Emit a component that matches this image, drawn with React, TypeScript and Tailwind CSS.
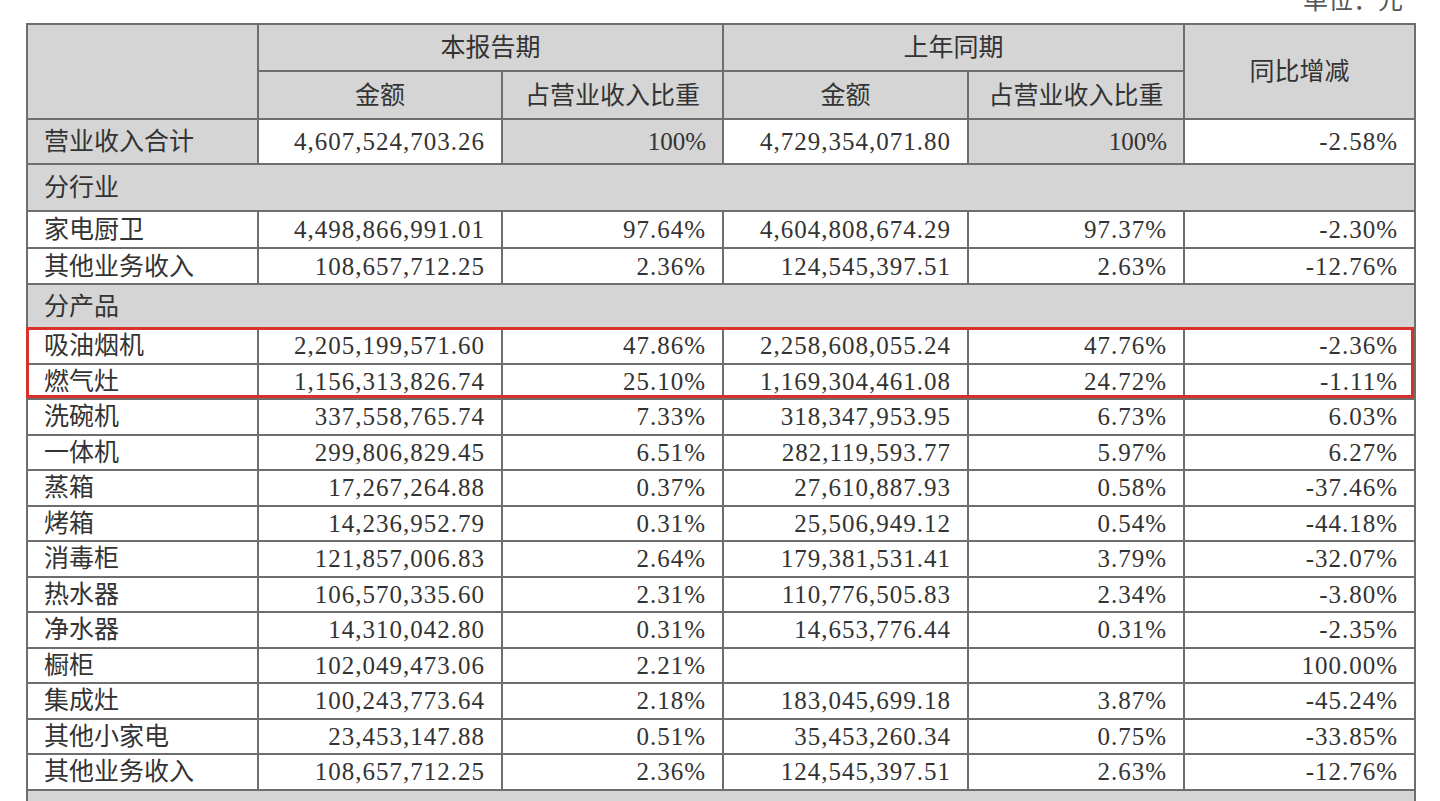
import React from 'react';

type Row =
  | { kind: 'section'; name: string }
  | { kind: 'data'; name: string; cells: string[]; h?: string };

const rows: Row[] = [
  { kind: 'section', name: '分行业' },
  { kind: 'data', name: '家电厨卫', cells: ['4,498,866,991.01', '97.64%', '4,604,808,674.29', '97.37%', '-2.30%'], h: 'h-[37px]' },
  { kind: 'data', name: '其他业务收入', cells: ['108,657,712.25', '2.36%', '124,545,397.51', '2.63%', '-12.76%'], h: 'h-[36px]' },
  { kind: 'section', name: '分产品' },
  { kind: 'data', name: '吸油烟机', cells: ['2,205,199,571.60', '47.86%', '2,258,608,055.24', '47.76%', '-2.36%'] },
  { kind: 'data', name: '燃气灶', cells: ['1,156,313,826.74', '25.10%', '1,169,304,461.08', '24.72%', '-1.11%'] },
  { kind: 'data', name: '洗碗机', cells: ['337,558,765.74', '7.33%', '318,347,953.95', '6.73%', '6.03%'] },
  { kind: 'data', name: '一体机', cells: ['299,806,829.45', '6.51%', '282,119,593.77', '5.97%', '6.27%'] },
  { kind: 'data', name: '蒸箱', cells: ['17,267,264.88', '0.37%', '27,610,887.93', '0.58%', '-37.46%'] },
  { kind: 'data', name: '烤箱', cells: ['14,236,952.79', '0.31%', '25,506,949.12', '0.54%', '-44.18%'] },
  { kind: 'data', name: '消毒柜', cells: ['121,857,006.83', '2.64%', '179,381,531.41', '3.79%', '-32.07%'] },
  { kind: 'data', name: '热水器', cells: ['106,570,335.60', '2.31%', '110,776,505.83', '2.34%', '-3.80%'] },
  { kind: 'data', name: '净水器', cells: ['14,310,042.80', '0.31%', '14,653,776.44', '0.31%', '-2.35%'] },
  { kind: 'data', name: '橱柜', cells: ['102,049,473.06', '2.21%', '', '', '100.00%'] },
  { kind: 'data', name: '集成灶', cells: ['100,243,773.64', '2.18%', '183,045,699.18', '3.87%', '-45.24%'] },
  { kind: 'data', name: '其他小家电', cells: ['23,453,147.88', '0.51%', '35,453,260.34', '0.75%', '-33.85%'] },
  { kind: 'data', name: '其他业务收入', cells: ['108,657,712.25', '2.36%', '124,545,397.51', '2.63%', '-12.76%'] },
];

const cell = 'border-2 border-[#6e6e6e]';

export default function App() {
  return (
    <div
      className="w-[1440px] h-[801px] overflow-hidden bg-white text-[#333] text-[25px] leading-none"
      style={{ fontFamily: '"Liberation Serif", "Noto Sans CJK SC", serif' }}
    >
      {/* unit line, mostly cut off at the top */}
      <div className="h-[23px] overflow-hidden flex justify-end pr-[37px]">
        <div className="-mt-[12px] text-[#555]">单位：元</div>
      </div>

      <div className="relative ml-[26px] w-[1388px]">
        <table className="w-[1388px] table-fixed border-collapse">
          <colgroup>
            <col className="w-[231px]" />
            <col className="w-[244px]" />
            <col className="w-[221px]" />
            <col className="w-[245px]" />
            <col className="w-[216px]" />
            <col className="w-[231px]" />
          </colgroup>
          <thead>
            <tr className="h-[47px] bg-[#d5d5d5]">
              <th rowSpan={2} className={cell}></th>
              <th colSpan={2} className={`${cell} font-normal text-center`}>本报告期</th>
              <th colSpan={2} className={`${cell} font-normal text-center`}>上年同期</th>
              <th rowSpan={2} className={`${cell} font-normal text-center`}>同比增减</th>
            </tr>
            <tr className="h-[48px] bg-[#d5d5d5]">
              <th className={`${cell} font-normal text-center`}>金额</th>
              <th className={`${cell} font-normal text-center`}>占营业收入比重</th>
              <th className={`${cell} font-normal text-center`}>金额</th>
              <th className={`${cell} font-normal text-center`}>占营业收入比重</th>
            </tr>
          </thead>
          <tbody>
            <tr className="h-[45px]">
              <td className={`${cell} bg-[#d5d5d5] pl-[16px]`}>营业收入合计</td>
              <td className={`${cell} bg-white text-right pr-[16px] tracking-[1px]`}>4,607,524,703.26</td>
              <td className={`${cell} bg-[#d5d5d5] text-right pr-[16px]`}>100%</td>
              <td className={`${cell} bg-white text-right pr-[16px] tracking-[1px]`}>4,729,354,071.80</td>
              <td className={`${cell} bg-[#d5d5d5] text-right pr-[16px]`}>100%</td>
              <td className={`${cell} bg-white text-right pr-[16px] tracking-[1px]`}>-2.58%</td>
            </tr>
            {rows.map((r, i) =>
              r.kind === 'section' ? (
                <tr key={i} className={i === 0 ? 'h-[47px] bg-[#d5d5d5]' : 'h-[44px] bg-[#d5d5d5]'}>
                  <td colSpan={6} className={`${cell} pl-[16px]`}>{r.name}</td>
                </tr>
              ) : (
                <tr key={i} className={r.h ?? 'h-[35.5px]'}>
                  <td className={`${cell} pl-[16px] whitespace-nowrap`}>{r.name}</td>
                  {r.cells.map((c, j) => (
                    <td key={j} className={`${cell} text-right pr-[16px] tracking-[1px] whitespace-nowrap`}>{c}</td>
                  ))}
                </tr>
              )
            )}
            <tr className="h-[20px] bg-[#d5d5d5]">
              <td colSpan={6} className={cell}></td>
            </tr>
          </tbody>
        </table>

        {/* red highlight annotation over two rows */}
        <div className="absolute left-0 top-[304px] w-[1388px] h-[71px] border-[3px] border-[#d9302c] pointer-events-none" />
      </div>
    </div>
  );
}
